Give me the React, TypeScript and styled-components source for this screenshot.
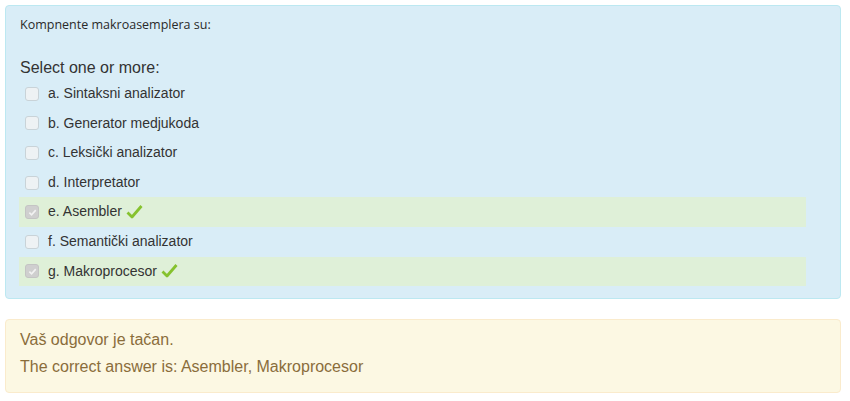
import React from "react";
import styled, { createGlobalStyle } from "styled-components";

const Global = createGlobalStyle`
  html, body { margin: 0; padding: 0; background: #fff; }
  body { font-family: "Liberation Sans", Arial, sans-serif; color: #333; }
`;

const Page = styled.div`
  padding: 5px 9px 5px 5px;
  display: flex;
  flex-direction: column;
  gap: 20px;
`;

const QuestionPanel = styled.div`
  background: #d9edf7;
  border: 1px solid #bce8f1;
  border-radius: 4px;
  padding: 9px 14px 12px 14px;
`;

const QText = styled.div`
  font-family: "Open Sans", "Noto Sans", sans-serif;
  font-size: 12.5px;
  line-height: 20px;
  color: #2a2a2a;
  margin-bottom: 22px;
`;

const Prompt = styled.div`
  font-size: 16px;
  line-height: 22px;
  color: #333;
`;

const Answers = styled.div`
  display: flex;
  flex-direction: column;
  margin-right: 20px;
  margin-left: -1px;
`;

const Row = styled.label<{ $correct?: boolean }>`
  display: flex;
  align-items: center;
  padding: 5px 0 5px 6px;
  font-size: 14px;
  line-height: 19.6px;
  color: #333;
  background: ${(p) => (p.$correct ? "#dff0d8" : "transparent")};
`;

const Box = styled.span<{ $checked?: boolean }>`
  width: 12px;
  height: 12px;
  border-radius: 3px;
  border: 1px solid ${(p) => (p.$checked ? "#c4c4c4" : "#c9d3d8")};
  background: ${(p) => (p.$checked ? "#cfcfcf" : "#eef2f4")};
  margin-right: 9px;
  display: flex;
  align-items: center;
  justify-content: center;
  flex: none;
`;

const Tick = styled.svg`
  margin-left: 4px;
  flex: none;
`;

const Feedback = styled.div`
  background: #fcf8e3;
  border: 1px solid #faebcc;
  border-radius: 4px;
  padding: 6px 14px 12px 14px;
  color: #8a6d3b;
  font-size: 16px;
  line-height: 27px;
`;

const options = [
  { t: "a. Sintaksni analizator" },
  { t: "b. Generator medjukoda" },
  { t: "c. Leksički analizator" },
  { t: "d. Interpretator" },
  { t: "e. Asembler", c: true },
  { t: "f. Semantički analizator" },
  { t: "g. Makroprocesor", c: true },
];

export default function App() {
  return (
    <>
      <Global />
      <Page>
        <QuestionPanel>
          <QText>Kompnente makroasemplera su:</QText>
          <Prompt>Select one or more:</Prompt>
          <Answers>
            {options.map((o) => (
              <Row key={o.t} $correct={o.c}>
                <Box $checked={o.c}>
                  {o.c && (
                    <svg width="9" height="9" viewBox="0 0 10 10">
                      <path d="M1.5 5.2 L4 7.6 L8.6 2.4" fill="none" stroke="#f2f2f2" strokeWidth="1.8" />
                    </svg>
                  )}
                </Box>
                {o.t}
                {o.c && (
                  <Tick width="17" height="16" viewBox="0 0 17 16">
                    <path d="M1.5 8.5 L6 13 L15.5 2" fill="none" stroke="#86c22e" strokeWidth="2.8" strokeLinejoin="round" />
                  </Tick>
                )}
              </Row>
            ))}
          </Answers>
        </QuestionPanel>
        <Feedback>
          <div>Vaš odgovor je tačan.</div>
          <div>The correct answer is: Asembler, Makroprocesor</div>
        </Feedback>
      </Page>
    </>
  );
}
